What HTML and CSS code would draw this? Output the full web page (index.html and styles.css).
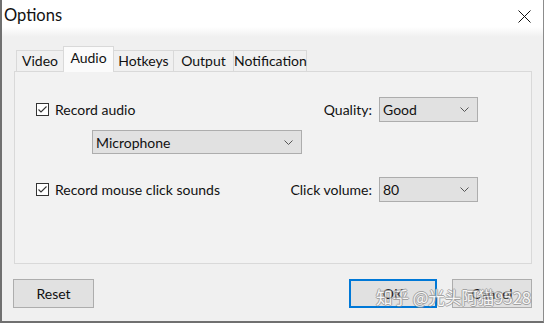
FILE: index.html
```html
<!DOCTYPE html>
<html lang="en">
<head>
    <meta charset="UTF-8">
    <title>Options</title>
    <link rel="stylesheet" href="styles.css">
</head>
<body>
    <div class="window">
        <div class="titlebar">
            <span class="title">Options</span>
            <svg class="close" width="13" height="13" viewBox="0 0 13 13">
                <path d="M0.5 0.5 L12.5 12.5 M12.5 0.5 L0.5 12.5" stroke="#111" stroke-width="1" fill="none"/>
            </svg>
        </div>
        <div class="content">
            <div class="tabs">
                <div class="tab video">Video</div>
                <div class="tab active">Audio</div>
                <div class="tab hotkeys">Hotkeys</div>
                <div class="tab output">Output</div>
                <div class="tab notification">Notification</div>
            </div>
            <div class="panel">
                <div class="row first">
                    <label class="check">
                        <span class="box">
                            <svg width="11" height="11" viewBox="0 0 11 11"><path d="M1.5 5.5 L4 8 L9.5 2.5" stroke="#333" stroke-width="1.1" fill="none"/></svg>
                        </span>
                        Record audio
                    </label>
                    <span class="field-label">Quality:</span>
                    <div class="combo">
                        <span>Good</span>
                        <svg width="9" height="5" viewBox="0 0 9 5"><path d="M0.5 0.5 L4.5 4.5 L8.5 0.5" stroke="#555" stroke-width="1" fill="none"/></svg>
                    </div>
                </div>
                <div class="row sub">
                    <div class="combo wide">
                        <span>Microphone</span>
                        <svg width="9" height="5" viewBox="0 0 9 5"><path d="M0.5 0.5 L4.5 4.5 L8.5 0.5" stroke="#555" stroke-width="1" fill="none"/></svg>
                    </div>
                </div>
                <div class="row third">
                    <label class="check">
                        <span class="box">
                            <svg width="11" height="11" viewBox="0 0 11 11"><path d="M1.5 5.5 L4 8 L9.5 2.5" stroke="#333" stroke-width="1.1" fill="none"/></svg>
                        </span>
                        Record mouse click sounds
                    </label>
                    <span class="field-label">Click volume:</span>
                    <div class="combo">
                        <span>80</span>
                        <svg width="9" height="5" viewBox="0 0 9 5"><path d="M0.5 0.5 L4.5 4.5 L8.5 0.5" stroke="#555" stroke-width="1" fill="none"/></svg>
                    </div>
                </div>
            </div>
            <div class="footer">
                <button class="btn reset">Reset</button>
                <span class="spacer"></span>
                <button class="btn ok">OK</button>
                <button class="btn cancel">Cancel</button>
                <div class="watermark">知乎 @光头阿猫9528</div>
            </div>
        </div>
    </div>
</body>
</html>
```

FILE: styles.css
```css
html, body {
    margin: 0;
    padding: 0;
    background: #fff;
}
body {
    font-family: Lato, "Noto Sans", sans-serif;
    font-size: 14px;
    color: #111;
}
.window {
    box-sizing: border-box;
    width: 544px;
    height: 323px;
    background: #f0f0f0;
    border-left: 2px solid #707070;
    border-right: 1px solid #8c8c8c;
    border-bottom: 2px solid #707070;
}
.titlebar {
    height: 37px;
    display: flex;
    align-items: flex-start;
    justify-content: space-between;
    background: linear-gradient(to bottom, #fff 0, #fff 27px, #f0f0f0 37px);
}
.title {
    font-size: 16.5px;
    padding: 5px 0 0 2px;
}
.close {
    margin: 10px 12px 0 0;
}
.content {
    padding: 9px 11px 0 12px;
}
.tabs {
    display: flex;
    align-items: flex-end;
    height: 25px;
    padding-left: 2px;
}
.tab {
    box-sizing: border-box;
    height: 21px;
    line-height: 20px;
    text-align: center;
    border: 1px solid #d9d9d9;
    border-bottom: none;
    margin-right: -1px;
    background: #f0f0f0;
}
.tab.video {
    width: 48px;
}
.tab.hotkeys {
    width: 61px;
}
.tab.output {
    width: 61px;
}
.tab.notification {
    width: 74px;
}
.tab.active {
    width: 51px;
    height: 26px;
    line-height: 21px;
    margin-bottom: -1px;
    background: #fbfbfb;
    position: relative;
    z-index: 1;
}
.panel {
    box-sizing: border-box;
    height: 193px;
    border: 1px solid #d9d9d9;
    background: #f2f2f2;
    padding: 25px 53px 0 21px;
}
.row {
    display: flex;
    align-items: center;
}
.row.first {
    height: 25px;
}
.row.sub {
    margin-top: 8px;
    padding-left: 56px;
}
.row.third {
    margin-top: 23px;
    height: 24px;
}
.check {
    flex: 1;
    display: flex;
    align-items: center;
}
.box {
    box-sizing: border-box;
    width: 13px;
    height: 13px;
    border: 1px solid #333;
    background: #fff;
    margin-right: 6px;
    display: flex;
}
.field-label {
    margin-right: 7px;
}
.combo {
    box-sizing: border-box;
    width: 99px;
    height: 25px;
    border: 1px solid #adadad;
    background: #e1e1e1;
    display: flex;
    align-items: center;
    justify-content: space-between;
    padding: 0 8px 0 3px;
}
.combo.wide {
    width: 210px;
    height: 24px;
}
.footer {
    display: flex;
    margin-top: 15px;
    position: relative;
}
.btn {
    box-sizing: border-box;
    height: 29px;
    border: 1px solid #adadad;
    background: #e1e1e1;
    font-family: inherit;
    font-size: 14px;
    color: #111;
    padding: 0;
}
.reset {
    width: 81px;
    margin-left: -1px;
}
.spacer {
    flex: 1;
}
.ok {
    width: 88px;
    border: 2px solid #0078d7;
    margin-right: 15px;
}
.cancel {
    width: 80px;
}
.watermark {
    position: absolute;
    right: 1px;
    top: 6px;
    font-family: "Noto Sans CJK SC", sans-serif;
    font-size: 16.5px;
    color: #fff;
    text-shadow: 1px 0 0 #888, -1px 0 0 #888, 0 1px 0 #888, 0 -1px 0 #888;
    opacity: 0.7;
}
```
